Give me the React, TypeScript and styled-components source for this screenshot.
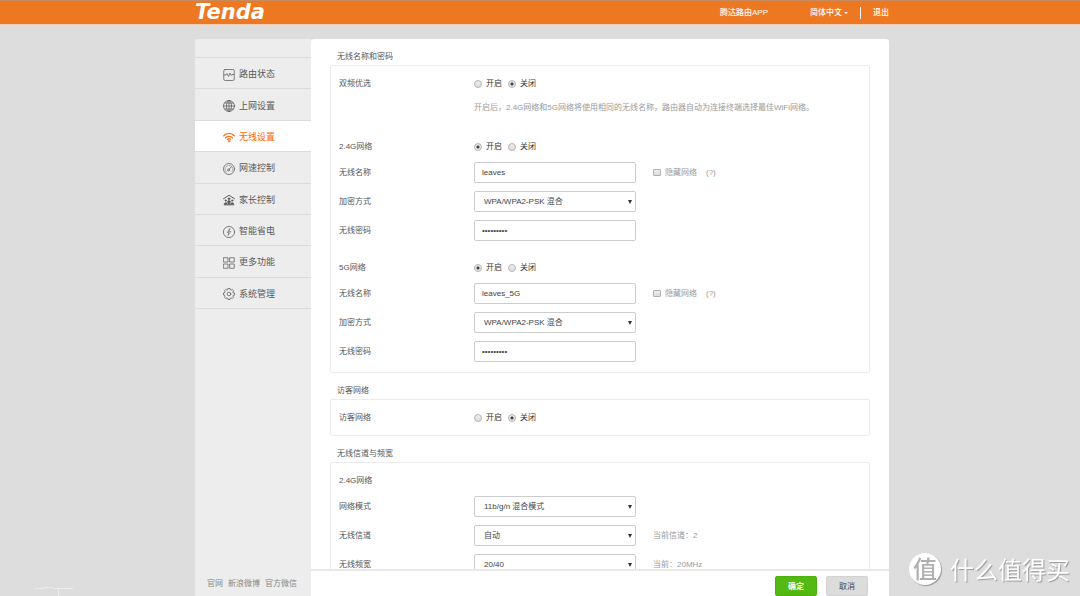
import React, { ReactNode, useId, useState } from "react";
import styled, { createGlobalStyle, css } from "styled-components";

const GlobalStyle = createGlobalStyle`
  *, *::before, *::after { box-sizing: border-box; }
  html, body { margin: 0; padding: 0; }
  body {
    background: #dddddd;
    color: #555555;
    font: 8px/17px "Liberation Sans", "Noto Sans CJK SC", sans-serif;
  }
  button, input, select { font: inherit; color: inherit; margin: 0; }
  a { color: inherit; text-decoration: none; }
`;

const Page = styled.div`
  display: flex;
  flex-direction: column;
  height: 100vh;
  overflow: hidden;
`;

const TopBar = styled.header`
  flex: none;
  padding-left: 4px;
  background: #ee7722;
  border-top: 1px solid #c98a5e;
  border-bottom: 1px solid #f2cdb2;
`;

const TopBarInner = styled.div`
  display: flex;
  align-items: center;
  justify-content: space-between;
  width: 100%;
  max-width: 694px;
  height: 23px;
  margin: 0 auto;
  color: #ffffff;
`;

const Logo = styled.a`
  font: italic bold 21px/23px "DejaVu Sans", sans-serif;
`;

const TopLinks = styled.nav`
  display: flex;
  align-items: center;
`;

const TopLink = styled.a`
  font-size: 8px;
  font-weight: 500;
`;

const LanguageButton = styled.button`
  display: flex;
  align-items: center;
  gap: 2px;
  margin: 0 12px 0 42px;
  padding: 0 12px 0 0;
  border: 0;
  border-right: 1px solid #ffffff;
  background: none;
  line-height: 12px;
  font-weight: 500;
`;

const Caret = styled.span`
  border: 2px solid transparent;
  border-top-color: currentColor;
  border-bottom: 0;
`;

const Body = styled.div`
  flex: 1;
  min-height: 0;
  padding: 14px 0 0 4px;
`;

const Shell = styled.div`
  display: flex;
  width: 100%;
  max-width: 694px;
  height: 100%;
  margin: 0 auto;
`;

const Sidebar = styled.aside`
  display: flex;
  flex-direction: column;
  justify-content: space-between;
  flex: none;
  width: 116px;
  padding-top: 18px;
  background: #ededed;
  border-radius: 3px 0 0 0;
`;

const Menu = styled.nav`
  display: flex;
  flex-direction: column;
  height: 252px;
  border-top: 1px solid #dcdcdc;
`;

const MenuItem = styled.a<{ $active?: boolean }>`
  display: flex;
  flex: 1;
  align-items: center;
  gap: 4px;
  padding: 3px 0 0 28px;
  border-bottom: 1px solid #dcdcdc;
  font-size: 9px;
  color: ${(p) => (p.$active ? "#ff6600" : "#5a5a5a")};
  background: ${(p) => (p.$active ? "#ffffff" : "transparent")};
`;

const Icon = styled.svg`
  flex: none;
  width: 12px;
  height: 12px;
  fill: none;
  stroke: currentColor;
  stroke-width: 1.5;
  stroke-linecap: round;
  stroke-linejoin: round;
`;

const SideLinks = styled.nav`
  display: flex;
  gap: 5px;
  padding: 0 0 4px 12px;
  color: #888888;
`;

const Content = styled.main`
  display: flex;
  flex: 1;
  flex-direction: column;
  min-width: 0;
  background: #ffffff;
  border-radius: 3px 3px 0 0;
`;

const ScrollArea = styled.div`
  display: flex;
  flex: 1;
  flex-direction: column;
  gap: 9px;
  min-height: 0;
  padding: 9px 19px 0 19px;
  overflow-y: auto;
  scrollbar-width: none;
`;

const SectionTitle = styled.h2`
  margin: 0;
  padding-left: 7px;
  font-size: 8px;
  font-weight: 400;
  line-height: 17px;
`;

const Panel = styled.div`
  display: flex;
  flex-direction: column;
  gap: 18px;
  padding: 9px 8px 10px;
  border: 1px solid #ececec;
  border-radius: 2px;
`;

const Group = styled.div<{ $spaced?: boolean }>`
  display: flex;
  flex-direction: column;
  gap: 8px;
  ${(p) => p.$spaced && css`padding-bottom: 4px;`}
`;

const Row = styled.div<{ $compact?: boolean }>`
  display: grid;
  grid-template-columns: 135px 162px 1fr;
  align-items: center;
  height: ${(p) => (p.$compact ? 17 : 21)}px;
  margin-bottom: ${(p) => (p.$compact ? -1 : 0)}px;
`;

const RowLabel = styled.label`
  white-space: nowrap;
`;

const Radios = styled.div`
  display: flex;
  gap: 6px;
  color: #333333;
`;

const Choice = styled.label<{ $muted?: boolean }>`
  display: flex;
  align-items: center;
  gap: 4px;
  white-space: nowrap;
  color: ${(p) => (p.$muted ? "#999999" : "#333333")};
`;

const Radio = styled.input`
  appearance: none;
  width: 8px;
  height: 8px;
  border: 1px solid #b4b4b4;
  border-radius: 50%;
  background: linear-gradient(#ededed, #dddddd);
  &:checked {
    background: radial-gradient(circle, #444444 0 1px, #e8e8e8 2px);
  }
`;

const Check = styled.input`
  appearance: none;
  width: 8px;
  height: 7px;
  border: 1px solid #b0b0b0;
  border-radius: 1px;
  background: linear-gradient(#eeeeee, #dcdcdc);
`;

const Hint = styled.p`
  margin: 0 0 0 135px;
  color: #999999;
  white-space: nowrap;
`;

const Aside = styled.div`
  display: flex;
  gap: 9px;
  padding-left: 17px;
  color: #999999;
`;

const controlBox = css`
  width: 100%;
  height: 21px;
  border: 1px solid #cccccc;
  border-radius: 2px;
  background: #ffffff;
  color: #444444;
  outline: 0;
`;

const TextBox = styled.input`
  ${controlBox}
  padding: 0 7px;
`;

const SelectWrap = styled.div`
  display: grid;
  align-items: center;
  & > * { grid-area: 1 / 1; }
`;

const Select = styled.select`
  ${controlBox}
  appearance: none;
  padding: 0 9px;
`;

const Arrow = styled.span`
  justify-self: end;
  margin-right: 4px;
  border: 2px solid transparent;
  border-top: 4px solid #333333;
  border-bottom: 0;
  pointer-events: none;
`;

const Footer = styled.footer`
  display: flex;
  flex: none;
  justify-content: flex-end;
  gap: 9px;
  height: 27px;
  padding: 5px 21px 0 0;
  border-top: 2px solid #e8e8e8;
`;

const ActionButton = styled.button<{ $primary?: boolean }>`
  width: 42px;
  height: 20px;
  padding: 0;
  border: 1px solid ${(p) => (p.$primary ? "#4cb10c" : "#d2d2d2")};
  border-radius: 2px;
  background: ${(p) => (p.$primary ? "#54b910" : "#dcdcdc")};
  color: ${(p) => (p.$primary ? "#ffffff" : "#444444")};
  font-weight: ${(p) => (p.$primary ? 700 : 400)};
`;

const Watermark = styled.div`
  position: fixed;
  right: 10px;
  bottom: 10px;
  display: flex;
  align-items: center;
  gap: 9px;
  color: #ffffff;
  font: 24px/34px "Noto Sans CJK SC", sans-serif;
  text-shadow: 1px 1px 1px #999999;
`;

const Seal = styled.span`
  width: 32px;
  height: 32px;
  border-radius: 50%;
  background: #ffffff;
  box-shadow: 1px 1px 1px #999999;
  color: #b0b0b0;
  font-size: 24px;
  font-weight: 500;
  line-height: 30px;
  text-align: center;
  text-shadow: none;
`;

const CornerMark = styled.svg`
  position: fixed;
  left: 35px;
  bottom: 0;
  width: 39px;
  height: 10px;
  fill: none;
  stroke: #ececec;
`;

const gearTeeth = Array.from({ length: 8 }, (_, i) => {
  const at = (deg: number, r: number) => {
    const a = ((i * 45 + deg) * Math.PI) / 180;
    return `${(12 + r * Math.cos(a)).toFixed(2)} ${(12 + r * Math.sin(a)).toFixed(2)}`;
  };
  return `${at(-15, 9)} L${at(-11, 11.3)} L${at(11, 11.3)} L${at(15, 9)}`;
}).join(" L");

const menu: { label: string; icon: ReactNode; active?: boolean }[] = [
  {
    label: "路由状态",
    icon: (
      <>
        <rect x="1.5" y="1" width="21" height="22" rx="3" />
        <path d="M2 12h4l2-3 3 6 3-7 2.5 5 1.5-2h4" />
      </>
    ),
  },
  {
    label: "上网设置",
    icon: (
      <>
        <circle cx="12" cy="12" r="11" />
        <ellipse cx="12" cy="12" rx="5" ry="11" />
        <path d="M12 1v22M1 12h22M3.5 6h17M3.5 18h17" />
      </>
    ),
  },
  {
    label: "无线设置",
    active: true,
    icon: (
      <>
        <path strokeWidth="2.4" d="M1.500 9.500c6-6 15-6 21 0M5 13.500c4-4 10-4 14 0M8.500 17.200c2-2 5-2 7 0" />
        <circle cx="12" cy="20.5" r="1.5" fill="currentColor" />
      </>
    ),
  },
  {
    label: "网速控制",
    icon: (
      <>
        <circle cx="12" cy="12" r="11" />
        <path d="M6.500 17.500a7.500 7.500 0 1 1 11 0" strokeWidth="1.2" strokeDasharray="1 2.500" />
        <circle cx="11" cy="14" r="2" />
        <path d="M12.500 12.500l4-5" />
      </>
    ),
  },
  {
    label: "家长控制",
    icon: (
      <>
        <path strokeWidth="2" d="M1 9.500L12 2.500l11 7" />
        <g fill="currentColor" strokeWidth="1">
          <circle cx="12" cy="9.5" r="2" />
          <circle cx="5.5" cy="13" r="1.6" />
          <circle cx="18.5" cy="13" r="1.6" />
          <path d="M8.500 16c0-4 7-4 7 0l-1 1h-5zM2 21.500c0-6 7-6 7 0zM15 21.500c0-6 7-6 7 0zM9.500 21.500l1-4h3l1 4z" />
        </g>
      </>
    ),
  },
  {
    label: "智能省电",
    icon: (
      <>
        <circle cx="12" cy="12" r="11.2" />
        <path d="M13.500 5.500l-5 7.500h3l-1.500 6 5.500-8h-3.500z" strokeWidth="1.2" />
      </>
    ),
  },
  {
    label: "更多功能",
    icon: (
      <>
        <rect x="1.500" y="1.500" width="8.500" height="8.500" />
        <rect x="14" y="1.500" width="8.500" height="8.500" />
        <rect x="1.500" y="14" width="8.500" height="8.500" />
        <rect x="14" y="14" width="8.500" height="8.500" />
      </>
    ),
  },
  {
    label: "系统管理",
    icon: (
      <>
        <path d={`M${gearTeeth}Z`} />
        <circle cx="12" cy="12" r="3.6" />
      </>
    ),
  },
];

function Switch({ label, initial }: { label: string; initial: boolean }) {
  const name = useId();
  const [on, setOn] = useState(initial);
  return (
    <Row $compact role="radiogroup" aria-label={label}>
      <span>{label}</span>
      <Radios>
        <Choice>
          <Radio type="radio" name={name} checked={on} onChange={() => setOn(true)} />
          开启
        </Choice>
        <Choice>
          <Radio type="radio" name={name} checked={!on} onChange={() => setOn(false)} />
          关闭
        </Choice>
      </Radios>
    </Row>
  );
}

function TextField(props: { label: string; value: string; type?: string; children?: ReactNode }) {
  const id = useId();
  return (
    <Row>
      <RowLabel htmlFor={id}>{props.label}</RowLabel>
      <TextBox id={id} type={props.type ?? "text"} defaultValue={props.value} />
      {props.children}
    </Row>
  );
}

function SelectField(props: { label: string; value: string; children?: ReactNode }) {
  const id = useId();
  return (
    <Row>
      <RowLabel htmlFor={id}>{props.label}</RowLabel>
      <SelectWrap>
        <Select id={id} defaultValue={props.value}>
          <option>{props.value}</option>
        </Select>
        <Arrow />
      </SelectWrap>
      {props.children}
    </Row>
  );
}

function Network({ label, ssid }: { label: string; ssid: string }) {
  return (
    <Group>
      <Switch label={label} initial />
      <TextField label="无线名称" value={ssid}>
        <Aside>
          <Choice $muted>
            <Check type="checkbox" />
            隐藏网络
          </Choice>
          <span>(?)</span>
        </Aside>
      </TextField>
      <SelectField label="加密方式" value="WPA/WPA2-PSK 混合" />
      <TextField label="无线密码" type="password" value="password1" />
    </Group>
  );
}

export default function App() {
  return (
    <Page>
      <GlobalStyle />
      <TopBar>
        <TopBarInner>
          <Logo href="#">Tenda</Logo>
          <TopLinks>
            <TopLink href="#app">腾达路由APP</TopLink>
            <LanguageButton type="button">
              简体中文
              <Caret />
            </LanguageButton>
            <TopLink href="#logout">退出</TopLink>
          </TopLinks>
        </TopBarInner>
      </TopBar>
      <Body>
        <Shell>
          <Sidebar>
            <Menu>
              {menu.map((item) => (
                <MenuItem key={item.label} href="#" $active={item.active}>
                  <Icon viewBox="0 0 24 24" aria-hidden="true">{item.icon}</Icon>
                  {item.label}
                </MenuItem>
              ))}
            </Menu>
            <SideLinks>
              <a href="#site">官网</a>
              <a href="#weibo">新浪微博</a>
              <a href="#wechat">官方微信</a>
            </SideLinks>
          </Sidebar>
          <Content>
            <ScrollArea>
              <section>
                <SectionTitle>无线名称和密码</SectionTitle>
                <Panel>
                  <Group $spaced>
                    <Switch label="双频优选" initial={false} />
                    <Hint>
                      开启后，2.4G网络和5G网络将使用相同的无线名称，路由器自动为连接终端选择最佳WiFi网络。
                    </Hint>
                  </Group>
                  <Network label="2.4G网络" ssid="leaves" />
                  <Network label="5G网络" ssid="leaves_5G" />
                </Panel>
              </section>
              <section>
                <SectionTitle>访客网络</SectionTitle>
                <Panel>
                  <Switch label="访客网络" initial={false} />
                </Panel>
              </section>
              <section>
                <SectionTitle>无线信道与频宽</SectionTitle>
                <Panel>
                  <Group>
                    <Row $compact>2.4G网络</Row>
                    <SelectField label="网络模式" value="11b/g/n 混合模式" />
                    <SelectField label="无线信道" value="自动">
                      <Aside>当前信道：2</Aside>
                    </SelectField>
                    <SelectField label="无线频宽" value="20/40">
                      <Aside>当前：20MHz</Aside>
                    </SelectField>
                  </Group>
                </Panel>
              </section>
            </ScrollArea>
            <Footer>
              <ActionButton type="button" $primary>确定</ActionButton>
              <ActionButton type="button">取消</ActionButton>
            </Footer>
          </Content>
        </Shell>
      </Body>
      <Watermark>
        <Seal>值</Seal>
        什么值得买
      </Watermark>
      <CornerMark viewBox="0 0 39 10" aria-hidden="true">
        <path d="M0 2.500h8l2-1.500 3 1 3-1 3 1.500 2 0h17M23.500 3v7" />
      </CornerMark>
    </Page>
  );
}
